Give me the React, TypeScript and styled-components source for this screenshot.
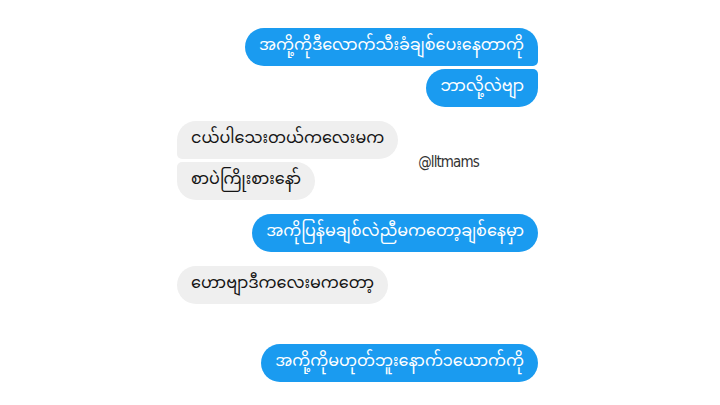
import { FC } from "react";
import styled, { createGlobalStyle } from "styled-components";

type Side = "me" | "them";
type Corner = "single" | "first" | "last";

const GlobalStyle = createGlobalStyle`
  html, body {
    margin: 0;
    padding: 0;
    background: #ffffff;
  }
  body {
    width: 720px;
    height: 405px;
    overflow: hidden;
  }
`;

const myanmarFont = `"Noto Sans Myanmar", "Noto Sans Myanmar UI", "Padauk", "Myanmar Text", "Noto Sans", sans-serif`;

const Bubble: FC<{ side: Side; corner?: Corner; children: string }> = ({ side, corner = "single", children }) => (
  <BubbleBox $side={side} $corner={corner}>
    {children}
  </BubbleBox>
);

const App: FC = () => {
  return (
    <Page>
      <GlobalStyle />
      <Thread>
        <Group $side="me">
          <Bubble side="me" corner="first">
            အကို့ကိုဒီလောက်သီးခံချစ်ပေးနေတာကို
          </Bubble>
          <Bubble side="me" corner="last">
            ဘာလို့လဲဗျာ
          </Bubble>
        </Group>

        <ReplyRow>
          <Group $side="them">
            <Bubble side="them" corner="first">
              ငယ်ပါသေးတယ်ကလေးမက
            </Bubble>
            <Bubble side="them" corner="last">
              စာပဲကြိုးစားနော်
            </Bubble>
          </Group>
          <Handle>@lltmams</Handle>
        </ReplyRow>

        <Group $side="me">
          <Bubble side="me">အကိုပြန်မချစ်လဲညီမကတော့ချစ်နေမှာ</Bubble>
        </Group>

        <Group $side="them">
          <Bubble side="them">ဟောဗျာဒီကလေးမကတော့</Bubble>
        </Group>

        <Group $side="me" $late>
          <Bubble side="me">အကို့ကိုမဟုတ်ဘူးနောက်၁ယောက်ကို</Bubble>
        </Group>
      </Thread>
    </Page>
  );
};

export default App;

const Page = styled.div`
  width: 720px;
  height: 405px;
  background: #ffffff;
  display: flex;
  justify-content: flex-start;
  padding: 28px 0 0 177px;
  box-sizing: border-box;
`;

const Thread = styled.div`
  width: 361px;
  display: flex;
  flex-direction: column;
  gap: 14px;
`;

const Group = styled.div<{ $side: Side; $late?: boolean }>`
  display: flex;
  flex-direction: column;
  gap: 3px;
  align-items: ${(p) => (p.$side === "me" ? "flex-end" : "flex-start")};
  margin-top: ${(p) => (p.$late ? "26px" : "0")};
`;

const ReplyRow = styled.div`
  display: flex;
  align-items: center;
  gap: 20px;
`;

const Handle = styled.span`
  font-family: "DejaVu Sans Condensed", "DejaVu Sans", sans-serif;
  font-size: 15px;
  letter-spacing: -0.9px;
  color: #333333;
  margin-top: 2px;
`;

const radius = (side: Side, corner: Corner) => {
  const big = "19px";
  const small = "5px";
  if (corner === "single") return big;
  if (side === "me") {
    return corner === "first" ? `${big} ${big} ${small} ${big}` : `${big} ${small} ${big} ${big}`;
  }
  return corner === "first" ? `${big} ${big} ${big} ${small}` : `${small} ${big} ${big} ${big}`;
};

const BubbleBox = styled.div<{ $side: Side; $corner: Corner }>`
  height: 38px;
  box-sizing: border-box;
  display: flex;
  align-items: center;
  padding: 0 14px;
  white-space: nowrap;
  font-family: ${myanmarFont};
  font-size: 16px;
  line-height: 1;
  color: ${(p) => (p.$side === "me" ? "#ffffff" : "#141414")};
  background: ${(p) => (p.$side === "me" ? "#1a9bf0" : "#efefef")};
  border-radius: ${(p) => radius(p.$side, p.$corner)};
`;
